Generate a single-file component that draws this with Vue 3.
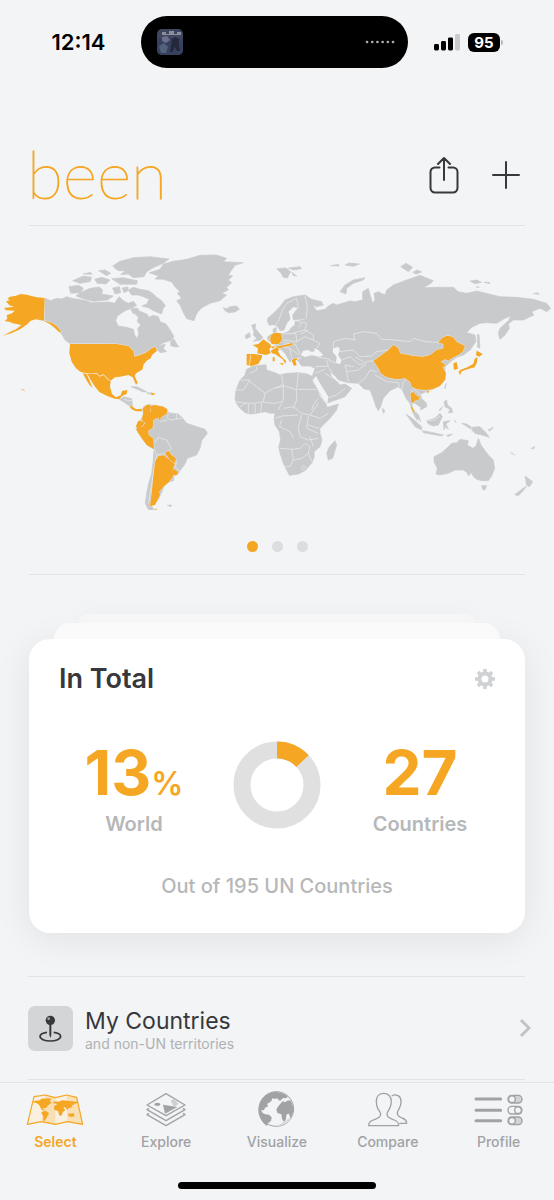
<script setup>
import { ref } from 'vue'

const page = ref(0)
const activeTab = ref('Select')
const tabs = ['Select', 'Explore', 'Visualize', 'Compare', 'Profile']
const share = 13
const arc = 2 * Math.PI * 35
</script>

<template>
  <div class="screen">
    <div class="status">
      <time class="clock">12:14</time>
      <div class="island">
        <svg class="cover" viewBox="0 0 26 26" aria-hidden="true">
          <rect width="26" height="26" rx="5" fill="#3f4660" />
          <path d="M0 9h26v12a5 5 0 0 1-5 5H5a5 5 0 0 1-5-5z" fill="#35415f" />
          <path d="M5 3h4v2h3V2h5v3h3V3h4v3H5z" fill="#8b8f9c" />
          <path d="M5 8l5-1 3 4-4 3-4-2z" fill="#706f8b" />
          <path d="M15 10l3-2 4 2v6l1 6h-3l-2-4-3 5h-2l1-7z" fill="#24283a" />
          <path d="M2 17l5-3 4 4-2 6H4z" fill="#53617c" />
        </svg>
        <svg class="wave" viewBox="0 0 30 4" aria-hidden="true">
          <path d="M2 2h27" stroke="#a9abb3" stroke-width="2.6" stroke-linecap="round" stroke-dasharray="0.1 5.1" />
        </svg>
      </div>
      <div class="radio">
        <svg class="signal" viewBox="0 0 26 17" aria-hidden="true">
          <rect y="10" width="5" height="6.5" rx="1.4" />
          <rect x="7" y="7" width="5" height="9.5" rx="1.4" />
          <rect x="14" y="3.5" width="5" height="13" rx="1.4" />
          <rect x="21" width="5" height="16.5" rx="1.4" fill="#c8cacc" />
        </svg>
        <span class="battery">95</span>
      </div>
    </div>

    <header class="head">
      <h1 class="brand">been</h1>
      <div class="actions">
        <button type="button" aria-label="Share">
          <svg width="30" height="38" viewBox="0 0 30 38">
            <path d="M10.500 11.500H6a4.500 4.500 0 0 0-4.500 4.500v16A4.500 4.500 0 0 0 6 36.500h18a4.500 4.500 0 0 0 4.500-4.500V16a4.500 4.500 0 0 0-4.500-4.500h-4.500M15 24V2M9 8l6-6 6 6" />
          </svg>
        </button>
        <button type="button" aria-label="Add">
          <svg width="28" height="28" viewBox="0 0 28 28"><path d="M14 1v26M1 14h26" /></svg>
        </button>
      </div>
    </header>

    <section class="world" aria-label="World map">
      <svg class="map" viewBox="0 0 1662 810" role="img" aria-label="Visited countries">
        <g class="land">
          <!-- Canada and the Arctic -->
          <path d="M134 174L152 182 170 175 185 177 200 170 215 175 235 178 260 182 275 188 300 187 325 186 345 190 350 180 358 170 370 182 385 190 400 184 410 196 395 205 375 212 352 228 347 242 355 258 380 262 400 268 404 285 412 296 416 280 413 266 422 254 412 245 415 232 405 222 420 214 440 222 448 232 458 226 475 230 480 245 498 252 512 272 522 290 515 301 490 308 474 318 496 312 490 325 500 335 480 338 468 325 455 325 437 338 420 345 402 350 400 330 385 318 350 312 210 311 195 300 185 282 165 262 150 247 134 243z" />
          <path d="M385 150L400 142 420 148 445 152 458 160 470 172 485 182 497 198 490 203 485 222 475 218 460 212 445 203 425 198 440 192 448 178 430 170 415 165 395 165z" />
          <path d="M207 140L235 136 250 144 242 158 212 160z M228 168L240 158 270 145 298 141 308 150 305 162 340 168 322 180 280 184 250 176z M218 122L250 108 275 112 270 125 240 130z M296 92L315 90 332 100 320 107z M284 118L305 112 330 120 318 132 292 130z M338 144L358 140 362 158 345 162z M366 144L384 141 384 152 372 158z M335 116L370 113 412 122 410 133 360 133z M392 206L412 204 420 216 400 222z M250 102L272 97 276 103z" />
          <path d="M338 78L360 64 400 53 450 50 507 57 490 70 462 82 440 95 432 110 400 113 385 102 362 104 375 92 355 92 345 85z" />
          <path d="M512 305L522 297 530 312 537 320 525 321 512 317z" />
          <!-- Greenland and Iceland -->
          <path d="M448 98L480 88 490 72 520 64 560 58 600 46 650 45 680 55 670 65 730 68 705 76 695 90 685 105 698 108 685 120 695 128 680 142 685 150 665 160 680 165 660 182 630 190 605 204 595 214 588 225 582 242 560 236 550 218 540 195 530 182 545 175 532 160 540 155 525 140 515 126 490 118 465 117 475 108z" />
          <path d="M670 203L680 206 690 200 710 198 718 208 705 216 685 218 674 211z" />
          <path d="M830 86L858 84 872 95 862 114 850 112 842 98z M865 84L900 80 905 86 880 90z M876 96L886 105 890 108 880 107z M992 77L1015 73 1018 78z M1035 75L1048 69 1078 72 1060 79z" />
          <!-- Eurasia -->
          <path d="M803 235L815 225 840 200 855 180 880 170 915 165 935 178 965 185 970 195 950 200 938 195 950 212 975 208 985 198 1000 190 1010 195 1050 183 1065 185 1088 180 1088 155 1105 145 1112 170 1118 190 1125 180 1122 160 1135 155 1155 165 1160 150 1180 135 1220 120 1260 106 1300 122 1290 132 1270 143 1310 142 1360 142 1375 155 1400 160 1430 153 1500 170 1550 172 1600 178 1640 190 1652 205 1640 215 1620 205 1595 215 1602 225 1570 240 1540 240 1525 252 1528 265 1515 285 1500 298 1495 280 1500 265 1525 242 1533 228 1515 235 1490 250 1460 248 1440 250 1415 262 1400 278 1425 285 1428 305 1410 330 1390 345 1370 352 1355 362 1335 380 1335 420 1300 447 1272 458 1262 462 1264 475 1280 490 1280 500 1262 510 1262 502 1245 490 1235 488 1240 510 1256 525 1262 545 1250 538 1238 518 1230 490 1218 475 1208 452 1195 440 1170 452 1150 475 1142 500 1135 512 1128 500 1118 470 1110 450 1092 447 1075 430 1045 428 1015 420 1000 405 1008 420 1020 435 1035 432 1055 445 1035 470 980 490 965 470 950 440 935 415 945 385 930 378 905 378 892 360 910 350 880 355 870 366 855 340 842 328 825 316 803 300 803 290 815 283 825 275 835 282 850 280 865 275 875 262 885 255 885 245 910 240 918 236 900 238 880 240 878 225 885 215 895 203 880 200 865 215 868 225 870 238 860 250 852 270 840 272 832 258 820 254 808 256 802 245z" />
          <path d="M819 268L829 262 828 278 820 278z M755 255L768 252 765 265 778 280 788 292 782 300 760 304 770 295 760 285 762 275z M735 287L748 278 752 290 738 296z" />
          <path d="M1020 155L1035 135 1060 120 1095 113 1090 120 1060 130 1040 145 1038 162z M1202 80L1218 70 1238 82 1225 95z M1238 97L1252 90 1265 96 1248 102z M1410 123L1430 120 1445 127 1425 131z M1452 127L1468 127 1470 131z M1600 161L1612 158 1618 163z M1432 283L1437 284 1440 324 1433 322z M1336 434L1339 430 1335 447z M1428 141L1438 142z" />
          <!-- Africa -->
          <path d="M740 388L760 378 798 374 800 390 825 398 840 405 860 400 895 398 922 402 935 408 938 425 950 445 960 470 978 492 982 502 1015 492 1010 510 990 535 960 565 960 580 966 600 960 620 942 635 943 650 935 670 915 692 895 702 868 706 860 690 850 670 840 640 836 620 842 600 838 575 825 555 822 535 825 520 810 520 795 515 770 520 750 522 735 518 720 505 708 488 705 475 708 450 720 420 735 405z" />
          <path d="M1005 602L1010 615 998 655 985 660 980 640 988 620z M1147 505L1155 512 1150 520z" />
          <!-- Southeast Asia and Oceania -->
          <path d="M1302 650L1325 638 1340 625 1355 610 1370 608 1380 598 1405 602 1402 615 1418 625 1428 618 1435 595 1443 615 1452 628 1465 645 1480 660 1484 685 1475 708 1465 722 1445 722 1430 718 1420 710 1415 698 1405 708 1402 698 1390 690 1365 690 1345 700 1320 705 1308 702 1312 685 1302 665z" />
          <path d="M1445 737L1460 737 1455 750 1448 748z M1385 550L1400 552 1415 562 1440 560 1458 578 1468 592 1445 585 1425 580 1410 565z M1280 542L1305 535 1320 520 1327 530 1315 555 1300 558 1285 552z M1218 522L1240 538 1265 560 1265 570 1245 560z M1268 572L1300 578 1330 585 1325 588 1270 578z M1330 545L1350 542 1338 552 1345 568 1335 560 1332 570z M1332 485L1340 480 1342 495 1355 505 1358 518 1345 518 1350 508 1335 500z M1317 510L1328 500 1320 512z M1575 708L1598 725 1588 740 1580 735z M1580 738L1570 752 1555 767 1544 764 1565 748z M1532 637L1544 645z M1593 625L1604 620 1600 627z M1464 570L1480 562 1470 573z M1340 586L1358 582 1344 590z M1363 540L1368 548z" />
          <!-- Americas -->
          <path d="M358 478L372 470 395 476 398 500 385 496 375 488z M393 440L410 440 440 455 430 456 410 447z M440 458L452 459 450 464z M502 796L515 795 512 800z" />
          <path d="M428 508L432 498 445 494 465 496 490 500 502 508 505 518 535 522 548 535 560 550 585 558 615 568 622 580 605 602 600 625 590 645 562 655 555 672 540 692 535 702 522 708 520 722 505 726 492 740 475 780 455 798 460 808 475 815 460 816 445 808 436 790 440 760 445 735 455 700 460 660 462 628 445 618 430 598 415 580 408 565 415 545 425 535 430 520z" />
        </g>
        <path class="sea" d="M902 345L910 332 925 330 935 336 945 333 942 325 955 330 970 345 960 350 935 346 915 351z M1000 325L1015 320 1020 330 1014 345 1024 360 1020 373 1008 368 1010 350 998 336z M948 408L960 430 985 470 982 492 970 478 955 450 938 420z M990 398L1005 408 1018 425 1010 424 998 412z" />
        <g class="borders">
          <path d="M815 270L835 245 845 215 860 190 890 175 M890 175L895 205 M915 168L922 200 918 236 M895 245L920 250 915 270 880 278 M905 250L895 262 M848 282L888 280 890 305 850 300 M890 305L915 290 940 300 960 310 950 325 M915 270L940 285 940 300 M850 308L885 312 900 340 M842 320L870 325 890 340 M870 325L875 355 M890 340L900 345 M925 270L900 283 M1000 325L1000 305 1035 295 1065 300 1060 282 1090 275 1130 280 1145 298 1185 300 1230 305 1240 295 1275 305 1330 308 M1020 335L1060 330 1080 350 1115 348 1130 335 1165 330 M1025 360L1050 350 1080 375 1100 365 1120 362 M950 350L990 358 M985 360L1010 370 M945 380L985 378 980 360 M985 380L1000 405 M945 400L975 388 M975 400L1000 415 M1045 425L1040 395 1035 375 1060 380 M1040 395L1075 390 1100 370 M1075 430L1095 415 1110 390 1130 395 M1035 445L1010 465 980 475 M1125 405L1160 425 1195 428 1198 440 M1205 450L1210 425 1225 415 M1232 448L1245 465 1260 475 M1240 445L1250 455 1262 465 M1065 350L1090 365" />
          <path d="M750 400L770 390 770 380 M705 450L730 450 750 420 720 420 M750 425L795 460 790 485 760 490 M795 460L820 445 850 440 845 405 M825 445L845 435 890 450 895 400 M890 450L890 480 880 505 M893 448L950 448 M850 440L850 480 835 510 M790 487L825 490 845 485 M708 485L740 490 760 490 M745 492L745 520 M765 492L766 518 M785 490L782 516 M720 500L738 488 M850 505L880 500 905 520 930 525 955 490 M955 475L940 495 935 510 M930 525L960 535 985 520 M905 525L895 560 900 590 925 600 955 595 M845 528L895 525 M840 560L870 575 880 595 M840 625L875 628 900 625 915 610 M875 628L880 660 870 680 855 680 M880 660L905 655 925 640 930 620 915 610 M925 640L935 665 M845 540L838 560 M825 535L848 528 M925 530L920 565 955 580 M958 565L925 555 M930 590L940 620 M904 686L912 676 918 682 910 690z" />
          <path d="M508 520L500 530 510 540 545 535 M530 522L530 538 M502 540L480 545 M462 610L475 592 500 600 515 625 505 635 520 648 530 665 525 680 540 695 M462 628L470 645 460 700 450 760 445 790 M470 645L495 640 M1415 562L1415 580 M1282 542L1305 540 1320 528 M372 478L385 482 396 482" />
        </g>
        <g class="visited">
          <path d="M134 174L110 172 95 168 80 164 62 162 48 167 30 170 22 176 30 181 18 184 28 196 42 200 12 204 18 211 44 212 36 220 20 226 22 236 14 243 30 246 38 250 50 252 64 255 48 268 30 276 8 287 36 279 60 268 80 254 92 242 108 238 134 243 155 248 170 258 184 275 178 277 162 262 148 251 132 244z" />
          <path d="M210 312L350 312 385 318 400 332 404 350 420 345 437 338 455 325 466 320 471 332 456 345 452 355 440 362 430 375 428 388 408 400 404 408 413 428 408 434 398 412 385 405 360 410 345 412 332 422 322 415 310 403 300 408 290 400 274 402 260 400 242 396 228 385 215 365 208 340z" />
          <path d="M248 400L260 402 268 420 278 444 268 434 258 418z M262 401L290 402 300 410 310 405 322 417 332 424 330 440 336 462 348 472 362 466 366 453 382 450 380 462 366 468 358 478 344 476 322 468 298 456 285 440 272 420z M386 496L398 500 408 508 424 506 428 514 408 514 395 508z M452 457L468 462 455 466z M60 446L72 449 75 454z M361 547L366 549z" />
          <path d="M428 505L440 495 450 493 450 515 475 520 478 532 460 540 460 560 448 555 425 540 430 520z M450 498L465 495 490 500 502 508 500 522 485 530 478 542 472 522 452 515z M415 542L435 545 428 558 412 568 408 558z M408 568L428 560 438 545 460 562 445 572 446 585 460 595 462 628 440 615 425 595z M475 648L492 646 515 665 525 672 516 690 520 708 508 725 490 740 478 755 480 765 465 795 450 798 455 760 460 710 465 665z M465 805L480 815 468 816z M495 640L505 632 515 645 528 655 525 670 510 660z M518 685L535 695 530 706 515 704z" />
          <path d="M740 342L762 342 787 346 785 355 775 372 755 378 740 375z M758 315L775 312 790 298 810 312 814 320 808 328 812 340 798 345 772 340 774 325z M812 285L825 278 843 280 847 298 837 312 815 312 810 300z M812 332L830 322 838 328 834 334 842 348 858 362 856 372 848 358 825 342 816 340z M838 369L850 370 848 376z M818 352L824 352 824 364 818 364z M825 320L855 315 878 308 878 315 855 320 840 325z M812 320L825 318 820 326z M875 362L882 355 896 356 886 362 890 375 882 378z M890 381L900 384z M701 416L710 415z" />
          <path d="M1120 362L1145 345 1165 330 1180 314 1195 325 1200 340 1240 348 1270 350 1290 345 1310 330 1330 325 1330 312 1315 308 1325 295 1340 287 1358 290 1370 305 1395 318 1388 335 1375 345 1355 355 1345 362 1335 358 1322 365 1338 375 1328 382 1338 400 1335 420 1320 438 1300 447 1280 450 1250 448 1235 440 1230 425 1215 415 1190 418 1160 412 1142 400 1135 385z M1280 453L1288 452 1284 461z" />
          <path d="M1360 370L1370 366 1374 386 1362 390z M1430 332L1448 342 1438 350 1428 346z M1433 351L1430 370 1424 382 1402 388 1382 395 1378 391 1402 382 1420 371 1424 356z M1375 393L1385 395 1380 405z M1231 462L1240 455 1248 465 1260 472 1255 480 1244 482 1240 490 1234 485z M1231 500L1236 500 1245 516 1240 516z M1254 538L1260 543z M1641 218L1655 222z" />
          <path class="split" d="M752 345L748 376" />
        </g>
      </svg>
      <div class="dots">
        <button v-for="n in 3" :key="n" type="button" :class="{ on: page === n - 1 }" :aria-label="'Map page ' + n" @click="page = n - 1"></button>
      </div>
    </section>

    <section class="card">
      <div class="card-head">
        <h2>In Total</h2>
        <button type="button" aria-label="Settings">
          <svg width="20" height="20" viewBox="0 0 20 20">
            <circle cx="10" cy="10" r="5.500" fill="none" stroke="#d0d1d3" stroke-width="4" />
            <path d="M10 0v4M10 16v4M0 10h4M16 10h4M2.900 2.900l3 3M14.100 14.100l3 3M17.100 2.900l-3 3M5.900 14.100l-3 3" stroke="#d0d1d3" stroke-width="3.600" />
          </svg>
        </button>
      </div>
      <div class="stats">
        <div class="stat">
          <p class="figure">{{ share }}<small>%</small></p>
          <p class="label">World</p>
        </div>
        <svg class="donut" viewBox="0 0 88 88" role="img" aria-label="13 percent">
          <circle cx="44" cy="44" r="35" fill="none" stroke="#e0e0e0" stroke-width="17" />
          <circle cx="44" cy="44" r="35" fill="none" stroke="#f5a623" stroke-width="17" :stroke-dasharray="(arc * share) / 100 + ' ' + arc" transform="rotate(-90 44 44)" />
        </svg>
        <div class="stat">
          <p class="figure">27</p>
          <p class="label">Countries</p>
        </div>
      </div>
      <p class="note">Out of 195 UN Countries</p>
    </section>

    <a class="row" href="#countries">
      <span class="tile">
        <svg width="45" height="45" viewBox="0 0 135 135">
          <path d="M57 79c-13 2-21 6-21 12 0 8 14 14 31 14s31-6 31-14c0-6-8-10-21-12" fill="none" stroke="#37383b" stroke-width="5" />
          <path d="M64 50h6v37l-3 9-3-9z" fill="#37383b" />
          <circle cx="67" cy="43" r="14" fill="#37383b" />
          <circle cx="62" cy="38" r="4" fill="#a5a6a8" />
        </svg>
      </span>
      <span class="row-text">
        <span class="row-title">My Countries</span>
        <span class="row-sub">and non-UN territories</span>
      </span>
      <svg class="chevron" width="12" height="20" viewBox="0 0 12 20"><path d="M2 2l8 8-8 8" /></svg>
    </a>

    <nav class="tabs">
      <button v-for="t in tabs" :key="t" type="button" :class="{ active: activeTab === t }" @click="activeTab = t">
        <svg v-if="t === 'Select'" width="58" height="36" viewBox="78 393 174 108">
          <path d="M102 410l34-5 30 8 34-8 30 7 18 81-46-8-36 8-42-8-42 8z" fill="#faf0df" />
          <path d="M136 405l30 8v80l-42-8zM200 405l30 7 18 81-46-8z" fill="#f9dfb4" />
          <path d="M102 410l34-5 30 8 34-8 30 7 18 81-46-8-36 8-42-8-42 8z" fill="none" stroke="currentColor" stroke-width="3.500" stroke-linejoin="round" />
          <path d="M101 423l18-2 6-5 28-1-3 10 6 2-13 10-5 7-9 1 3 6 7 4-14-6-7-13-7-6-11-3zM126 455l12-2 9 7-6 11-7 12-4-1 0-14-6-8zM157 429l9-5 10 1 10-4 22 2 25 2 2 4-12 2-2 5-7-2 4 7-13 4-3 6-7-10-5 2 6 7-8 7-2 9-8 1-4-14-11-3-1-11 10-7zM205 461l17-1 1 9-8 2-10-3z" fill="currentColor" />
        </svg>
        <svg v-else-if="t === 'Explore'" width="42" height="36" viewBox="435 393 126 108" fill="none" stroke="currentColor" stroke-width="4" stroke-linejoin="round">
          <path d="M441 435l57-34 57 34-57 32zM447 445l-6 4 57 33 57-33-6-4M447 460l-6 4 57 33 57-33-6-4" />
          <ellipse cx="472" cy="433" rx="9" ry="5" fill="currentColor" stroke="none" />
          <path d="M489 434l43 7-37 20z" fill="currentColor" stroke="none" />
          <path d="M512 422l10-5 14 14-14 10z" fill="#cfd0d2" stroke="none" />
        </svg>
        <svg v-else-if="t === 'Visualize'" width="37" height="36" viewBox="773 393 111 108">
          <circle cx="828" cy="447" r="52" fill="#f2f4f6" stroke="currentColor" stroke-width="3" />
          <path d="M829 499c29-4 49-19 49-52l-9 26-19 12z" fill="#dcdddf" />
          <path d="M781 425c8-15 21-26 40-29l15 1-4 9 4 4-11 7-9-2-3 9-13 8 4 7-8 3-6 9-8-1 5 9 8 4 11 1 8 8-2 11-9 7-3 8c-13-9-21-21-25-37-2-13 2-25 5-36zM829 397c13 0 24 5 34 13l-7 5-8-1-9 9-11-10zM840 431l8-8 5 4 8-5 9-1c6 10 9 20 9 29-1 10-4 18-9 25l-4-14-7 2-3 17-6 5-5-9-2-13-12-4-3-11 7-11z" fill="currentColor" />
        </svg>
        <svg v-else-if="t === 'Compare'" width="42" height="36" viewBox="279 393 126 108" fill="none" stroke="currentColor" stroke-width="4" stroke-linejoin="round">
          <path d="M284 497c0-12 7-15 19-19 12-4 17-9 17-16 0-5-5-9-9-17-3-6-4-14-4-21 0-15 9-24 22-24s23 9 23 24c0 8-2 15-5 21-4 8-8 12-8 17 0 8 5 12 17 16 13 4 18 8 18 19z" />
          <path d="M353 408c5-3 8-4 12-3 11 1 16 9 16 20 0 8-2 14-5 20-3 6-6 9-6 15 0 7 6 11 14 14 9 3 14 7 14 16h-22" />
        </svg>
        <svg v-else width="50" height="36" viewBox="600 393 150 108" stroke="currentColor">
          <path d="M606 417h74M606 451h74M606 482h74" stroke-width="9" stroke-linecap="round" />
          <g fill="#d2d3d5" stroke-width="4">
            <rect x="702" y="406" width="42" height="23" rx="11" />
            <rect x="702" y="439" width="42" height="23" rx="11" fill="#f2f4f6" />
            <rect x="702" y="471" width="42" height="23" rx="11" />
          </g>
          <g fill="#f2f4f6" stroke-width="4">
            <circle cx="714" cy="417.500" r="10" /><circle cx="732" cy="450.500" r="10" /><circle cx="714" cy="482.500" r="10" />
          </g>
        </svg>
        <span>{{ t }}</span>
      </button>
    </nav>
    <div class="home"></div>
  </div>
</template>

<style>
body {
  background: #f2f4f6;
}
</style>

<style scoped>
.screen {
  display: flex;
  flex-direction: column;
  min-height: 100vh;
  overflow: hidden;
  background: #f2f4f6;
  color: #37383b;
  font-family: Inter, "Liberation Sans", sans-serif;
}
button {
  padding: 0;
  border: 0;
  background: none;
  color: inherit;
  font: inherit;
  cursor: pointer;
}
svg {
  display: block;
}
h1, h2, p {
  margin: 0;
}
.status {
  display: grid;
  grid-template-columns: 1fr 267px 1fr;
  align-items: center;
  padding: 16px 5px 0 0;
  color: #000;
}
.clock {
  padding-left: 16px;
  text-align: center;
  font-size: 22px;
  line-height: 26px;
  font-weight: 600;
}
.island {
  display: flex;
  align-items: center;
  justify-content: space-between;
  height: 52px;
  padding: 0 13px 0 16px;
  box-sizing: border-box;
  border-radius: 26px;
  background: #000;
}
.cover {
  width: 26px;
  height: 26px;
}
.wave {
  width: 30px;
  height: 4px;
}
.radio {
  display: flex;
  align-items: center;
  padding-left: 26px;
  gap: 8px;
}
.signal {
  width: 26px;
  height: 17px;
}
.battery {
  position: relative;
  width: 32px;
  border-radius: 6px;
  background: #000;
  color: #fff;
  text-align: center;
  font-size: 15px;
  line-height: 19px;
  font-weight: 700;
}
.battery::after {
  content: "";
  position: absolute;
  top: 7px;
  right: -3px;
  width: 2px;
  height: 5px;
  border-radius: 0 2px 2px 0;
  background: #b5b6b8;
}
.head {
  display: flex;
  align-items: center;
  justify-content: space-between;
  height: 95px;
  margin: 62px 29px 0;
  border-bottom: 1px solid #e1e3e5;
}
.brand {
  margin-left: -2px;
  padding-bottom: 8px;
  color: #f5a623;
  font-family: Lato, sans-serif;
  font-size: 66px;
  line-height: 80px;
  font-weight: 100;
  -webkit-text-stroke: 1px #f5a623;
}
.actions {
  display: flex;
  align-items: center;
  gap: 33px;
  padding: 0 5px 6px 0;
}
.actions path {
  fill: none;
  stroke: #37383b;
  stroke-width: 2;
  stroke-linecap: round;
  stroke-linejoin: round;
}
.world {
  padding-top: 14px;
}
.map {
  width: 100%;
  height: auto;
}
.land {
  fill: #c9cacc;
  stroke: #c9cacc;
  stroke-width: 2;
  stroke-linejoin: round;
}
.sea {
  fill: #f2f4f6;
}
.borders {
  fill: none;
  stroke: #eceef0;
  stroke-width: 2;
  stroke-linejoin: round;
}
.visited {
  fill: #f5a623;
  stroke: #f2f4f6;
  stroke-width: 2;
  stroke-linejoin: round;
  paint-order: stroke;
}
.dots {
  display: flex;
  justify-content: center;
  gap: 14px;
  margin: 0 29px;
  padding: 31px 0 22px;
  border-bottom: 1px solid #e1e3e5;
}
.dots button {
  width: 11px;
  height: 11px;
  border-radius: 50%;
  background: #dcddde;
}
.dots .on {
  background: #f5a623;
}
.card {
  position: relative;
  margin: 64px 29px 43px;
  padding: 24px 30px 35px;
  border-radius: 21px;
  background: #fff;
  box-shadow: 0 6px 36px rgba(0, 0, 0, 0.08);
}
.card::before,
.card::after {
  content: "";
  position: absolute;
  border-radius: 21px 21px 0 0;
}
.card::before {
  top: -16px;
  right: 25px;
  left: 25px;
  height: 16px;
  background: #fafafa;
}
.card::after {
  top: -25px;
  right: 50px;
  left: 50px;
  height: 9px;
  background: #f6f6f7;
  box-shadow: 0 0 24px rgba(0, 0, 0, 0.05);
  clip-path: inset(-40px -40px 0 -40px);
}
.card-head {
  display: flex;
  align-items: center;
  justify-content: space-between;
}
.card-head h2 {
  font-size: 27px;
  line-height: 32px;
  font-weight: 600;
}
.stats {
  display: grid;
  grid-template-columns: 1fr 88px 1fr;
  align-items: start;
  margin: 46px -24px 0;
}
.stat {
  text-align: center;
}
.figure {
  color: #f5a623;
  font-size: 62px;
  line-height: 64px;
  font-weight: 700;
}
.figure small {
  font-size: 32px;
  line-height: 32px;
  font-weight: 600;
}
.label {
  margin-top: 7px;
  color: #b6b7b9;
  font-size: 20px;
  line-height: 24px;
  font-weight: 600;
}
.note {
  margin-top: 38px;
  color: #b6b7b9;
  text-align: center;
  font-size: 20px;
  line-height: 24px;
  font-weight: 500;
}
.row {
  display: flex;
  align-items: center;
  gap: 12px;
  margin: 0 23px 0 28px;
  padding: 27px 0;
  background: linear-gradient(#e1e3e5, #e1e3e5) top left / calc(100% - 6px) 1px no-repeat,
    linear-gradient(#e1e3e5, #e1e3e5) bottom left / calc(100% - 6px) 1px no-repeat;
  color: #37383b;
  text-decoration: none;
}
.tile {
  border-radius: 7px;
  background: #d4d5d6;
}
.row-text {
  display: flex;
  flex: 1;
  flex-direction: column;
  padding-top: 4px;
}
.row-title {
  font-size: 23px;
  line-height: 28px;
}
.row-sub {
  color: #b0b1b3;
  font-size: 14px;
  line-height: 18px;
}
.chevron path {
  fill: none;
  stroke: #c2c3c5;
  stroke-width: 3;
}
.tabs {
  display: grid;
  grid-template-columns: repeat(5, 1fr);
  margin-top: 2px;
  padding-top: 8px;
  border-top: 1px solid #e1e3e5;
  color: #a1a2a4;
}
.tabs button {
  display: flex;
  flex-direction: column;
  align-items: center;
  gap: 6px;
  font-size: 14px;
  line-height: 18px;
  font-weight: 500;
}
.tabs .active {
  color: #f5a623;
  font-weight: 600;
}
.home {
  width: 198px;
  height: 7px;
  margin: auto auto 11px;
  border-radius: 4px;
  background: #000;
}
</style>
